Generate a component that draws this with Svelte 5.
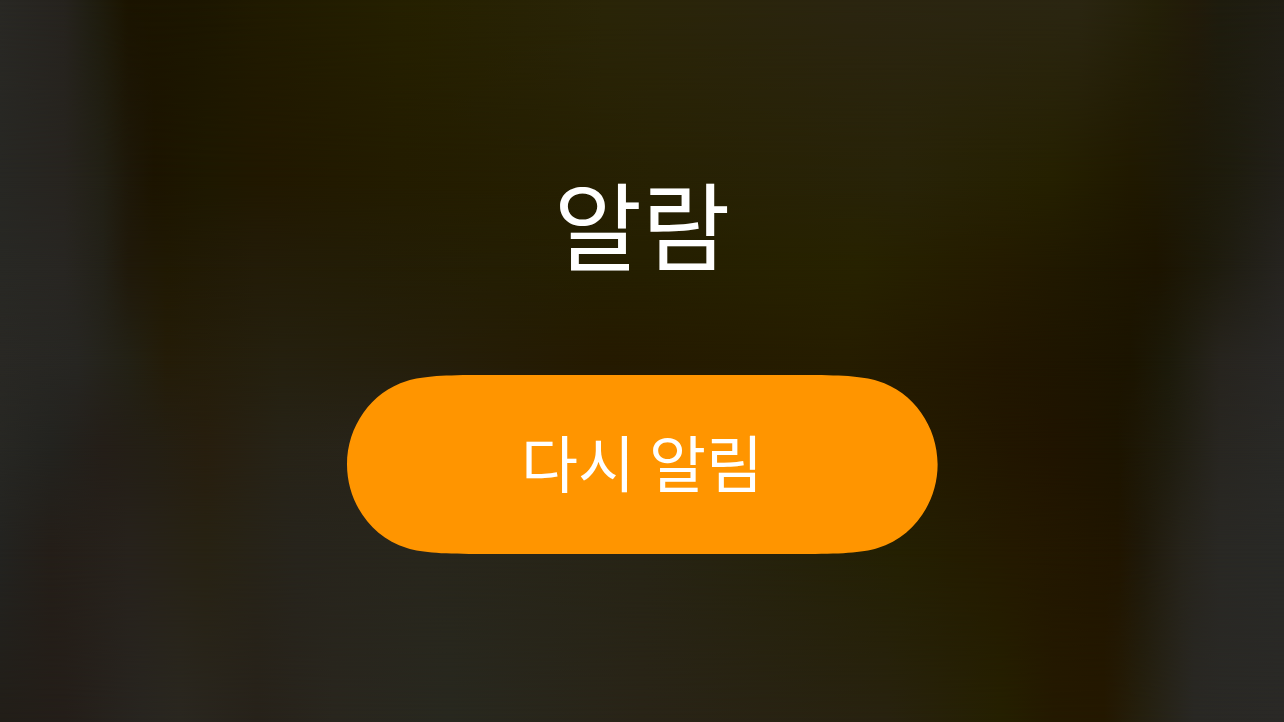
<script lang="ts">
interface Band {
	from: number;
	to: number;
	stops: [string, number][];
}

// Each band fades in over the one before it, between `from` and `to` (% of height).
const bands: Band[] = [
	{
		from: 0,
		to: 0,
		stops: [
			['#292824', 0], ['#26231e', 5], ['#201e12', 7], ['#1d1806', 9], ['#1b1400', 10],
			['#1c1600', 15], ['#201a00', 20], ['#252000', 31], ['#2a2508', 47], ['#2b2510', 66],
			['#2b2612', 84], ['#242008', 90], ['#221b0a', 93], ['#1e1c0e', 95], ['#201e14', 100],
		],
	},
	{
		from: 0,
		to: 25,
		stops: [
			['#272723', 0], ['#27241f', 5], ['#222015', 8], ['#1e1809', 10], ['#1c1400', 12],
			['#1e1800', 16], ['#211800', 21], ['#231c00', 31], ['#272103', 51], ['#282308', 70],
			['#252000', 82], ['#201900', 88], ['#1d1908', 93], ['#1e1c0e', 96], ['#22201a', 100],
		],
	},
	{
		from: 25,
		to: 37,
		stops: [
			['#282824', 0], ['#282622', 5], ['#232118', 8], ['#20190a', 10], ['#201903', 13],
			['#231c08', 20], ['#231d06', 27], ['#251f00', 50], ['#272200', 67], ['#241b00', 78],
			['#1e1700', 86], ['#1c1400', 90], ['#1d1a0b', 94], ['#211f16', 97], ['#262420', 100],
		],
	},
	{
		from: 37,
		to: 50,
		stops: [
			['#292824', 0], ['#272622', 6], ['#232115', 10], ['#241c08', 13], ['#25200f', 22],
			['#251e0a', 33], ['#251a00', 47], ['#261d00', 66], ['#211600', 78], ['#1b1400', 88],
			['#1c1a0a', 91], ['#27241e', 95], ['#292826', 100],
		],
	},
	{
		from: 50,
		to: 62,
		stops: [
			['#272723', 0], ['#23231f', 4], ['#241e18', 8], ['#241f14', 12], ['#271e0e', 16],
			['#272317', 22], ['#28241a', 30], ['#261f08', 50], ['#241a00', 72], ['#201400', 82],
			['#1c1400', 87], ['#1f1c0e', 91], ['#282621', 95], ['#292926', 100],
		],
	},
	{
		from: 62,
		to: 76,
		stops: [
			['#232320', 0], ['#241e18', 4], ['#27221c', 10], ['#272213', 16], ['#27241c', 23],
			['#28261c', 33], ['#272415', 50], ['#242002', 70], ['#241900', 79], ['#201500', 87],
			['#1f190a', 89], ['#26231a', 92], ['#292824', 95], ['#292926', 100],
		],
	},
	{
		from: 76,
		to: 100,
		stops: [
			['#221e18', 0], ['#241e19', 5], ['#282520', 11], ['#2a2720', 14], ['#27221a', 20],
			['#29261e', 26], ['#28281f', 35], ['#292417', 50], ['#28220f', 69], ['#252000', 78],
			['#241900', 82], ['#241800', 86], ['#25200f', 89], ['#292824', 93], ['#2a2926', 100],
		],
	},
];

function paint({ from, to, stops }: Band): string {
	const colors = stops.map(([color, at]) => `${color} ${at}%`).join(', ');
	let css = `background: linear-gradient(to right, ${colors});`;
	if (to > from) {
		css += ` mask-image: linear-gradient(to bottom, transparent ${from}%, #000 ${to}%);`;
	}
	return css;
}

let ringing = $state(true);
</script>

<main class="alarm">
  <div class="backdrop" aria-hidden="true">
    {#each bands as band}
      <div class="band" style={paint(band)}></div>
    {/each}
  </div>
  <h1>알람</h1>
  <button type="button" class="snooze" aria-pressed={!ringing} onclick={() => (ringing = false)}>
    <svg class="pill" viewBox="0 0 592 180" preserveAspectRatio="none" aria-hidden="true">
      <path
        d="M136 0H456C494 0 516 1 532 6C568 17 592 52 592 90S568 163 532 174C516 179 494 180 456 180H136C98 180 76 179 60 174C24 163 0 128 0 90S24 17 60 6C76 1 98 0 136 0Z"
      />
    </svg>
    <span>다시 알림</span>
  </button>
</main>

<style>
  :global(body) {
    margin: 0;
    background: #241b02;
  }
  .alarm {
    position: relative;
    box-sizing: border-box;
    min-height: 100vh;
    display: flex;
    flex-direction: column;
    align-items: center;
    justify-content: center;
    gap: 99px;
    color: #fff;
    font-family: 'Noto Sans CJK KR', sans-serif;
  }
  .backdrop,
  .band,
  .pill {
    position: absolute;
    inset: 0;
  }
  h1 {
    position: relative;
    margin: 0;
    font-size: 96px;
    font-weight: 400;
    line-height: 108px;
  }
  .snooze {
    position: relative;
    width: 46%;
    min-width: 320px;
    padding: 45px 24px 51px;
    border: 0;
    background: none;
    color: inherit;
    font-family: inherit;
    font-size: 62px;
    font-weight: 400;
    line-height: 83px;
    cursor: pointer;
  }
  .snooze span {
    position: relative;
  }
  .pill {
    width: 100%;
    height: 100%;
    overflow: visible;
    fill: #ff9500;
  }
</style>
